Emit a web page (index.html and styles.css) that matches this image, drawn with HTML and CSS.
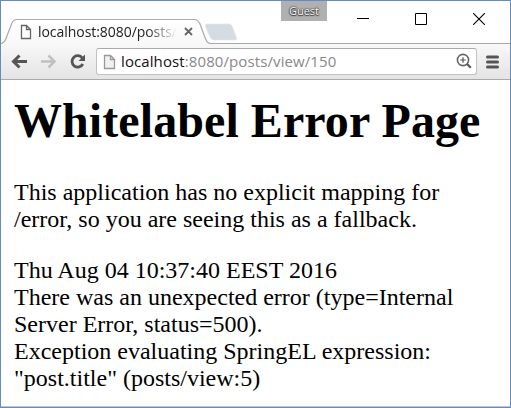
FILE: index.html
```html
<!DOCTYPE html>
<html lang="en">
<head>
<meta charset="utf-8">
<title>Whitelabel Error Page</title>
<link rel="stylesheet" href="styles.css">
</head>
<body>
<div class="window">
  <header class="titlebar">
    <svg class="tab-shape" width="509" height="43" viewBox="1 1 509 43">
      <defs>
        <linearGradient id="tab" x1="0" y1="0" x2="0" y2="1"><stop offset="0" stop-color="#fff"/><stop offset="1" stop-color="#f8f8f8"/></linearGradient>
      </defs>
      <path d="M1 43.500C4 43 5 41 6 38.500L11.500 24C12.700 20.500 14 19.500 17 19.500H194C197.500 19.500 198.700 21 200 24L205 37.500C206.700 41.500 207.500 43.500 211 43.500V45H1Z" fill="url(#tab)"/>
      <path d="M1 43.500C4 43 5 41 6 38.500L11.500 24C12.700 20.500 14 19.500 17 19.500H194C197.500 19.500 198.700 21 200 24L205 37.500C206.700 41.500 207.500 43.500 211 43.500H510" fill="none" stroke="#a9a9a9" stroke-width="1.200"/>
      <path d="M207 24H229Q231.500 24 232.300 26.500L236.500 37.500Q237.500 40 235 40H214Q211 40 210 37L205.500 26.500Q204.500 24 207 24Z" fill="#d5dbe3" stroke="#e4e6ea" stroke-width=".7"/>
    </svg>
    <div class="tab">
      <svg class="page-icon" width="12" height="16" viewBox="0 0 12 16"><path d="M1.500 1.500H6.500L10.500 5.500V14.500H1.500ZM6.500 1.500V5.500H10.500" fill="#fff" stroke="#666" stroke-width="1.300"/></svg>
      <span class="tab-title">localhost:8080/posts/</span>
      <svg class="tab-close" width="9" height="9" viewBox="0 0 9 9"><path d="M1 1L8 8M8 1L1 8" stroke="#666" stroke-width="1.800"/></svg>
    </div>
    <span class="guest">Guest</span>
    <div class="controls">
      <svg width="12" height="12" viewBox="0 0 12 12"><path d="M0 5.500H12" stroke="#000"/></svg>
      <svg width="12" height="12" viewBox="0 0 12 12"><path d="M.5.5H11.500V11.500H.5Z" fill="none" stroke="#000"/></svg>
      <svg width="12" height="12" viewBox="0 0 12 12"><path d="M0 0L12 12M12 0L0 12" stroke="#000" stroke-width="1.100"/></svg>
    </div>
  </header>
  <nav class="toolbar">
    <svg class="nav-icons" width="76" height="18" viewBox="11 53 76 18">
      <path d="M27 61.500H14M19.500 55.500L13.500 61.500L19.500 67.500" fill="none" stroke="#555" stroke-width="3"/>
      <path d="M41 61.500H54M48.500 55.500L54.500 61.500L48.500 67.500" fill="none" stroke="#c0c0c0" stroke-width="2.500"/>
      <path d="M82.300 58A5.700 5.700 0 1 0 82.800 64" fill="none" stroke="#555" stroke-width="2.800"/>
      <path d="M85 54.500V61H78.500Z" fill="#555"/>
    </svg>
    <div class="address">
      <svg class="page-icon" width="13" height="16" viewBox="0 0 13 16"><path d="M1.500 1.500H7.500L11.500 5.500V14.500H1.500ZM7.500 1.500V5.500H11.500" fill="#f1f1f1" stroke="#999" stroke-width="1.300"/></svg>
      <span class="url"><b>localhost</b>:8080/posts/view/150</span>
      <svg class="zoom-icon" width="16" height="16" viewBox="0 0 16 16"><circle cx="7" cy="7" r="5.600" fill="none" stroke="#666" stroke-width="1.600"/><path d="M4.200 7H9.800M7 4.200V9.800" stroke="#555" stroke-width="1.200"/><path d="M11 11L14.800 14.800" stroke="#555" stroke-width="2.200"/></svg>
    </div>
    <svg class="menu" width="13" height="14" viewBox="0 0 13 14"><path d="M1.500 2H11.500M1.500 7H11.500M1.500 12H11.500" stroke="#555" stroke-width="3" stroke-linecap="round"/></svg>
  </nav>
  <main class="page">
    <h1>Whitelabel Error Page</h1>
    <p>This application has no explicit mapping for<br>/error, so you are seeing this as a fallback.</p>
    <div>Thu Aug 04 10:37:40 EEST 2016</div>
    <div>There was an unexpected error (type=Internal<br>Server Error, status=500).</div>
    <div>Exception evaluating SpringEL expression:<br>"post.title" (posts/view:5)</div>
  </main>
</div>
</body>
</html>
```
FILE: styles.css
```css
* { box-sizing: border-box; }
body { margin: 0; overflow: hidden; background: #fff; }
svg { display: block; flex: none; }
.window {
  width: 511px;
  height: 408px;
  border: 1px solid #638cc4;
  display: flex;
  flex-direction: column;
  background: #fff;
}
.titlebar {
  position: relative;
  height: 43px;
  flex: none;
  display: flex;
  align-items: flex-start;
  font-family: "Open Sans", "Noto Sans", sans-serif;
}
.tab-shape { position: absolute; left: 0; top: 0; }
.tab {
  position: relative;
  display: flex;
  align-items: center;
  width: 280px;
  height: 25px;
  margin-top: 18px;
  padding-left: 19px;
}
.tab-title {
  width: 139px;
  margin-left: 6px;
  white-space: nowrap;
  font-size: 14px;
  line-height: 22px;
  letter-spacing: -0.05px;
  color: #222;
  -webkit-mask-image: linear-gradient(90deg, #000 108px, transparent 139px);
  mask-image: linear-gradient(90deg, #000 108px, transparent 139px);
}
.tab-close { margin-left: 7px; }
.guest {
  width: 46px;
  height: 20px;
  background: #b0b0b0;
  color: #fff;
  font-size: 11px;
  line-height: 20px;
  text-align: center;
  text-shadow: 0 0 1px #333, 0 0 1px #333, 0 0 2px #444, 0 1px 1px #444;
}
.controls { display: flex; gap: 46px; margin: 12px 0 0 30px; }
.toolbar {
  height: 36px;
  flex: none;
  display: flex;
  align-items: center;
  padding-left: 10px;
  border-bottom: 1px solid #aaa;
  background: linear-gradient(#f8f8f8, #e4e4e4);
}
.address {
  display: flex;
  align-items: center;
  width: 381px;
  height: 27px;
  margin-left: 9px;
  padding: 0 4px 0 6px;
  border: 1px solid #c2c2c2;
  border-top-color: #aaa;
  border-radius: 3px;
  background: #fff;
  font-family: "Open Sans", "Noto Sans", sans-serif;
}
.url {
  flex: 1;
  margin: -2px 0 0 5px;
  font-size: 15px;
  line-height: 24px;
  letter-spacing: 0.1px;
  white-space: nowrap;
  color: #888;
}
.url b { font-weight: 400; color: #111; }
.zoom-icon { margin-top: -2px; }
.menu { margin-left: 9px; }
.page {
  flex: 1;
  padding: 13px 12px 0 13px;
  border-bottom: 1px solid #c4c4c4;
  font: 24px/27px "Liberation Serif", "Times New Roman", serif;
  color: #000;
}
h1 { margin: 0; font-size: 48px; line-height: 55px; font-weight: 700; letter-spacing: 0.08px; white-space: nowrap; }
p { margin: 31px 0 24px; }
```
